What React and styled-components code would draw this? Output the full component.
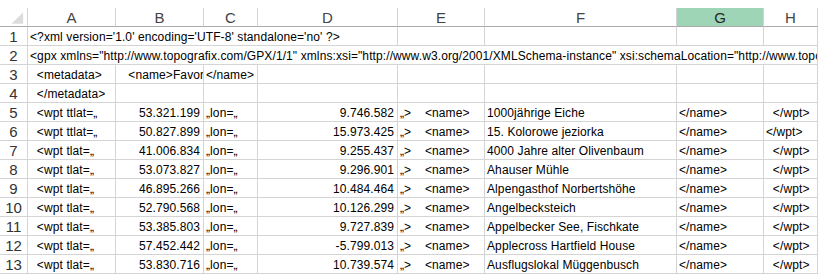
import React from 'react'
import styled, { createGlobalStyle } from 'styled-components'

const GlobalStyle = createGlobalStyle`
    body {
        margin: 0;
        background: #fff;
        overflow: hidden;
    }
`

const COLUMNS = ['A', 'B', 'C', 'D', 'E', 'F', 'G', 'H']
const SELECTED = 'G'

const waypoints = [
    { tag: 'ttlat', lat: '53.321.199', lon: '9.746.582', name: '1000jährige Eiche', end: '  </wpt>' },
    { tag: 'ttlat', lat: '50.827.899', lon: '15.973.425', name: '15. Kolorowe jeziorka', end: '</wpt>' },
    { tag: 'tlat', lat: '41.006.834', lon: '9.255.437', name: '4000 Jahre alter Olivenbaum', end: '  </wpt>' },
    { tag: 'tlat', lat: '53.073.827', lon: '9.296.901', name: 'Ahauser Mühle', end: '  </wpt>' },
    { tag: 'tlat', lat: '46.895.266', lon: '10.484.464', name: 'Alpengasthof Norbertshöhe', end: '  </wpt>' },
    { tag: 'tlat', lat: '52.790.568', lon: '10.126.299', name: 'Angelbecksteich', end: '  </wpt>' },
    { tag: 'tlat', lat: '53.385.803', lon: '9.727.839', name: 'Appelbecker See, Fischkate', end: '  </wpt>' },
    { tag: 'tlat', lat: '57.452.442', lon: '-5.799.013', name: 'Applecross Hartfield House', end: '  </wpt>' },
    { tag: 'tlat', lat: '53.830.716', lon: '10.739.574', name: 'Ausflugslokal Müggenbusch', end: '  </wpt>' },
]

const rows = [
    [{ span: 4, text: "<?xml version='1.0' encoding='UTF-8' standalone='no' ?>" }, {}, {}, {}, {}],
    [{ span: 8, text: '<gpx xmlns="http://www.topografix.com/GPX/1/1" xmlns:xsi="http://www.w3.org/2001/XMLSchema-instance" xsi:schemaLocation="http://www.topografix.com/GPX/1/1 http://www.topografix.com/GPX/1/1/gpx.xsd">' }],
    [{ text: '  <metadata>' }, { text: '   <name>Favoriten</name>' }, { text: '</name>' }, {}, {}, {}, {}, {}],
    [{ text: '  </metadata>' }, {}, {}, {}, {}, {}, {}, {}],
    ...waypoints.map(w => [
        { text: `  <wpt ${w.tag}=„` },
        { text: w.lat, num: true },
        { text: '„lon=„' },
        { text: w.lon, num: true },
        { text: '„>    <name>' },
        { text: w.name },
        { text: '</name>' },
        { text: w.end },
    ]),
]

function App () {
    return (
        <>
            <GlobalStyle />
            <Sheet>
                <Corner>
                    <svg width="28" height="18" viewBox="0 0 28 18">
                        <polygon points="24,4 24,16 12,16" fill="#dcdcdc" />
                    </svg>
                </Corner>
                { COLUMNS.map(c => (
                    <ColHead key={ c } selected={ c === SELECTED }>{ c }</ColHead>
                )) }

                { rows.map((cells, i) => (
                    <React.Fragment key={ i }>
                        <RowHead>{ i + 1 }</RowHead>
                        { cells.map((cell, j) => (
                            <Cell key={ j } span={ cell.span || 1 } num={ cell.num }>
                                { cell.text }
                            </Cell>
                        )) }
                    </React.Fragment>
                )) }
            </Sheet>
        </>
    )
}

export default App

const Sheet = styled.div`
    display: grid;
    grid-template-columns: 28px 88px 88px 54px 140px 87px 192px 87px 1fr;
    grid-template-rows: 19px;
    grid-auto-rows: 19px;
    padding-top: 8px;
    width: 818px;
    height: 276px;
    box-sizing: border-box;
    overflow: hidden;
`

const HeadBase = styled.div`
    box-sizing: border-box;
    display: flex;
    align-items: center;
    justify-content: center;
    font-family: "Liberation Sans", Arial, sans-serif;
    font-size: 15px;
    color: #444;
    border-right: 1px solid #d4d4d4;
    border-bottom: 1px solid #d4d4d4;
`

const Corner = styled(HeadBase)`
    border-bottom-color: #ababab;
    svg { display: block; }
`

const ColHead = styled(HeadBase)`
    background: ${ props => props.selected ? '#9fd5b7' : '#fff' };
    color: ${ props => props.selected ? '#262626' : '#444' };
    border-bottom-color: #ababab;
    padding-top: 1px;
`

const RowHead = styled(HeadBase)`
    color: #333;
    padding-top: 1px;
`

const Cell = styled.div`
    grid-column: span ${ props => props.span };
    box-sizing: border-box;
    min-width: 0;
    display: flex;
    align-items: center;
    justify-content: ${ props => props.num ? 'flex-end' : 'flex-start' };
    padding: 1px 3px 0 2px;
    font-family: "Liberation Sans", Arial, sans-serif;
    font-size: 12px;
    letter-spacing: 0.1px;
    color: #000;
    white-space: pre;
    overflow: hidden;
    border-right: 1px solid #d4d4d4;
    border-bottom: 1px solid #d4d4d4;
`
